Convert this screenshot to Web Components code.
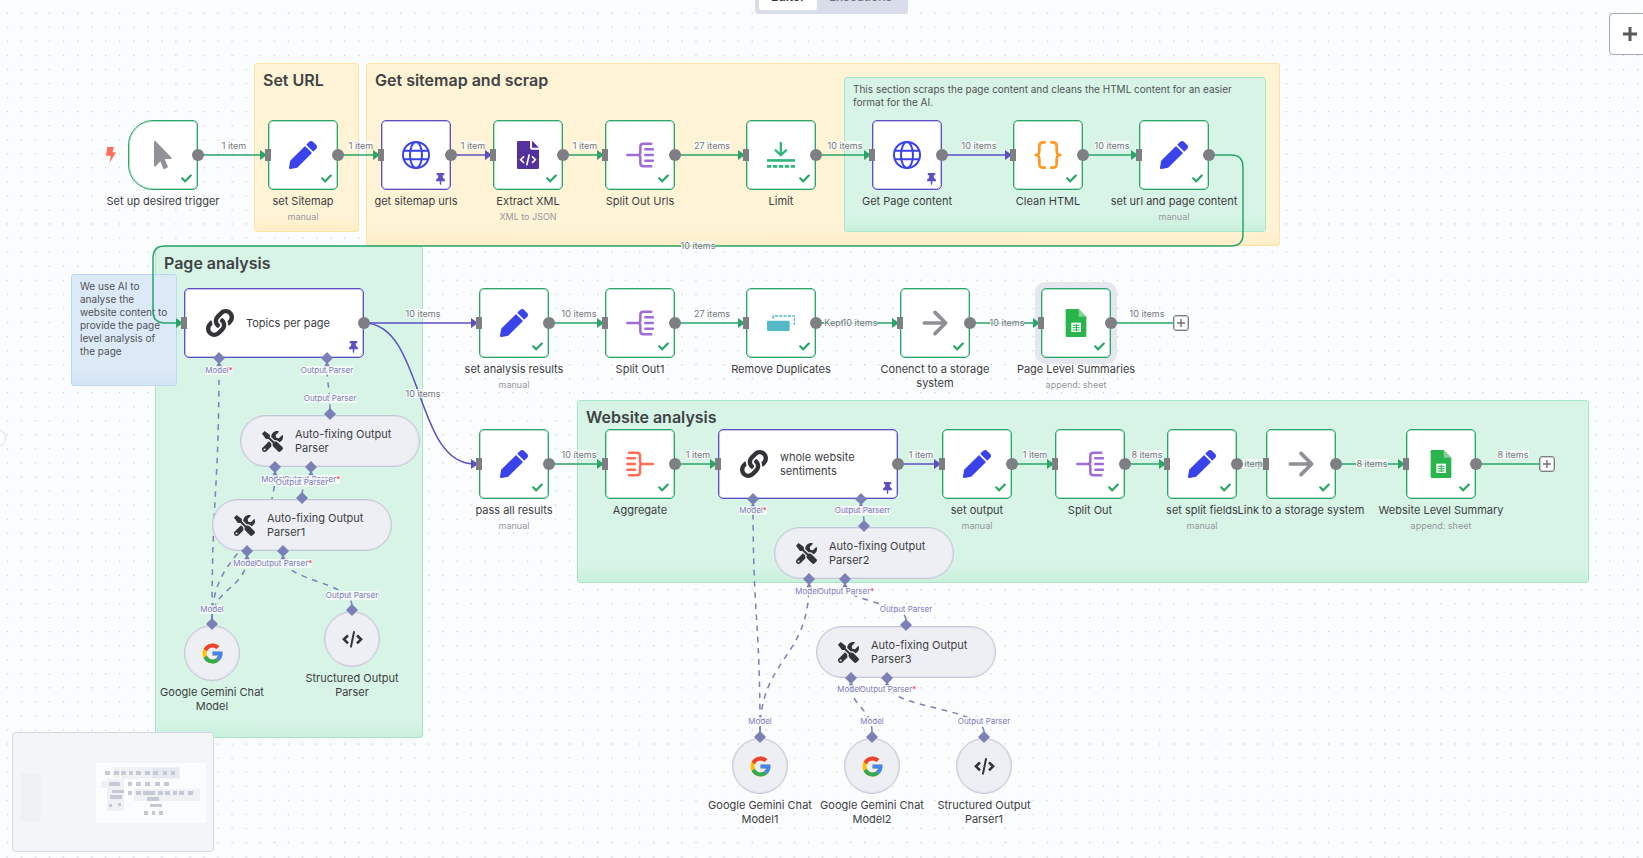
<!DOCTYPE html>
<html lang="en">
<head>
<meta charset="utf-8">
<title>Workflow editor</title>
<style>
html, body { margin: 0; height: 100%; }
body { font-family: Inter, "Liberation Sans", sans-serif; background: #fbfcfe; overflow: hidden; }
</style>
</head>
<body>
<flow-canvas>
  <sticky-note color="yellow" x="254" y="63" w="105" h="169"><h2>Set URL</h2></sticky-note>
  <sticky-note color="yellow" x="366" y="63" w="914" h="183"><h2>Get sitemap and scrap</h2></sticky-note>
  <sticky-note color="green" x="155" y="246" w="268" h="492"><h2>Page analysis</h2></sticky-note>
  <sticky-note color="green" x="577" y="400" w="1012" h="183"><h2>Website analysis</h2></sticky-note>
  <sticky-note color="green" x="844" y="77" w="422" h="155"><p>This section scraps the page content and cleans the HTML content for an easier format for the AI.</p></sticky-note>
  <sticky-note color="blue" x="71" y="274" w="106" h="112"><p>We use AI to analyse the website content to provide the page level analysis of the page</p></sticky-note>

  <flow-edges></flow-edges>

  <flow-label x="234" y="146">1 item</flow-label>
  <flow-label x="361" y="146">1 item</flow-label>
  <flow-label x="473" y="146">1 item</flow-label>
  <flow-label x="585" y="146">1 item</flow-label>
  <flow-label x="712" y="146">27 items</flow-label>
  <flow-label x="845" y="146">10 items</flow-label>
  <flow-label x="979" y="146">10 items</flow-label>
  <flow-label x="1112" y="146">10 items</flow-label>
  <flow-label x="698" y="246">10 items</flow-label>
  <flow-label x="423" y="314">10 items</flow-label>
  <flow-label x="423" y="394">10 items</flow-label>
  <flow-label x="579" y="314">10 items</flow-label>
  <flow-label x="712" y="314">27 items</flow-label>
  <flow-label x="834" y="323">Kept</flow-label>
  <flow-label x="860" y="323">10 items</flow-label>
  <flow-label x="1007" y="323">10 items</flow-label>
  <flow-label x="1147" y="314">10 items</flow-label>
  <flow-label x="579" y="455">10 items</flow-label>
  <flow-label x="698" y="455">1 item</flow-label>
  <flow-label x="921" y="455">1 item</flow-label>
  <flow-label x="1035" y="455">1 item</flow-label>
  <flow-label x="1147" y="455">8 items</flow-label>
  <flow-label x="1252" y="464">8 items</flow-label>
  <flow-label x="1372" y="464">8 items</flow-label>
  <flow-label x="1513" y="455">8 items</flow-label>

  <flow-node x="128" y="120" icon="pointer" trigger out>Set up desired trigger</flow-node>
  <flow-node x="268" y="120" icon="pencil" in out>set Sitemap<span slot="sub">manual</span></flow-node>
  <flow-node x="381" y="120" icon="globe" in out pinned>get sitemap urls</flow-node>
  <flow-node x="493" y="120" icon="xml" in out>Extract XML<span slot="sub">XML to JSON</span></flow-node>
  <flow-node x="605" y="120" icon="split" in out>Split Out Urls</flow-node>
  <flow-node x="746" y="120" icon="limit" in out>Limit</flow-node>
  <flow-node x="872" y="120" icon="globe" in out pinned>Get Page content</flow-node>
  <flow-node x="1013" y="120" icon="braces" in out>Clean HTML</flow-node>
  <flow-node x="1139" y="120" icon="pencil" in out>set url and page content<span slot="sub">manual</span></flow-node>

  <flow-node x="184" y="288" kind="wide" icon="link" in out pinned bottom="35 143">Topics per page</flow-node>
  <flow-node x="479" y="288" icon="pencil" in out>set analysis results<span slot="sub">manual</span></flow-node>
  <flow-node x="605" y="288" icon="split" in out>Split Out1</flow-node>
  <flow-node x="746" y="288" icon="dedupe" in out>Remove Duplicates</flow-node>
  <flow-node x="900" y="288" icon="arrow" in out>Conenct to a storage system</flow-node>
  <flow-node x="1041" y="288" icon="sheet" in out>Page Level Summaries<span slot="sub">append: sheet</span></flow-node>
  <add-step x="1173" y="315"></add-step>

  <flow-node x="479" y="429" icon="pencil" in out>pass all results<span slot="sub">manual</span></flow-node>
  <flow-node x="605" y="429" icon="merge" in out>Aggregate</flow-node>
  <flow-node x="718" y="429" kind="wide" icon="link" in out pinned bottom="35 143">whole website sentiments</flow-node>
  <flow-node x="942" y="429" icon="pencil" in out>set output<span slot="sub">manual</span></flow-node>
  <flow-node x="1055" y="429" icon="split" in out>Split Out</flow-node>
  <flow-node x="1167" y="429" icon="pencil" in out>set split fields<span slot="sub">manual</span></flow-node>
  <flow-node x="1266" y="429" icon="arrow" in out>Link to a storage system</flow-node>
  <flow-node x="1406" y="429" icon="sheet" in out>Website Level Summary<span slot="sub">append: sheet</span></flow-node>
  <add-step x="1539" y="456"></add-step>

  <flow-node x="240" y="415" kind="pill" icon="tools" top="90" bottom="35 71">Auto-fixing Output Parser</flow-node>
  <flow-node x="212" y="499" kind="pill" icon="tools" top="90" bottom="35 71">Auto-fixing Output Parser1</flow-node>
  <flow-node x="774" y="527" kind="pill" icon="tools" top="90" bottom="35 71">Auto-fixing Output Parser2</flow-node>
  <flow-node x="816" y="626" kind="pill" icon="tools" top="90" bottom="35 71">Auto-fixing Output Parser3</flow-node>

  <flow-node x="184" y="625" kind="round" icon="google" top="28">Google Gemini Chat Model</flow-node>
  <flow-node x="324" y="611" kind="round" icon="code" top="28">Structured Output Parser</flow-node>
  <flow-node x="732" y="738" kind="round" icon="google" top="28">Google Gemini Chat Model1</flow-node>
  <flow-node x="844" y="738" kind="round" icon="google" top="28">Google Gemini Chat Model2</flow-node>
  <flow-node x="956" y="738" kind="round" icon="code" top="28">Structured Output Parser1</flow-node>

  <flow-label port required x="219" y="371">Model</flow-label>
  <flow-label port x="327" y="371">Output Parser</flow-label>
  <flow-label port x="330" y="399">Output Parser</flow-label>
  <flow-label port required x="275" y="480">Model</flow-label>
  <flow-label port required x="312" y="480">Output Parser</flow-label>
  <flow-label port x="302" y="483">Output Parser</flow-label>
  <flow-label port required x="247" y="564">Model</flow-label>
  <flow-label port required x="284" y="564">Output Parser</flow-label>
  <flow-label port x="212" y="610">Model</flow-label>
  <flow-label port x="352" y="596">Output Parser</flow-label>
  <flow-label port required x="753" y="511">Model</flow-label>
  <flow-label port x="864" y="511">Output Parser</flow-label>
  <flow-label port x="861" y="511">Output Parser</flow-label>
  <flow-label port required x="809" y="592">Model</flow-label>
  <flow-label port required x="846" y="592">Output Parser</flow-label>
  <flow-label port x="906" y="610">Output Parser</flow-label>
  <flow-label port required x="851" y="690">Model</flow-label>
  <flow-label port required x="888" y="690">Output Parser</flow-label>
  <flow-label port x="760" y="722">Model</flow-label>
  <flow-label port x="872" y="722">Model</flow-label>
  <flow-label port x="984" y="722">Output Parser</flow-label>

  <view-tabs slot="chrome"></view-tabs>
  <add-node-button slot="chrome"></add-node-button>
  <panel-handle slot="chrome"></panel-handle>
  <mini-map slot="chrome"></mini-map>
</flow-canvas>

<script>
const GREEN = '#29a568', PURPLE = '#5b4fc2', PORT = '#7b80b6';

const splitPaths = `<path d="M500 314h22M528 314h3q8 0 8-8v-17q0-9 9-9h24M531 314q8 0 8 8v17q0 9 9 9h24M554 297h23M554 314h23M554 331h23"/>`;
const ICONS = {
  pointer: `<svg viewBox="0 0 320 512" fill="#909298"><path d="M302.189 329.126H196.105l55.831 135.993c3.889 9.428-.555 19.999-9.444 23.999l-49.165 21.427c-9.165 4-19.443-.571-23.332-9.714l-53.053-129.136-86.664 89.138C18.729 472.71 0 463.554 0 447.977V18.299C0 1.899 19.921-6.096 30.277 5.443l284.412 292.542c11.472 11.179 3.007 31.141-12.5 31.141z"/></svg>`,
  pencil: `<svg viewBox="0 0 512 512" fill="#3a42e9"><path d="M497.9 142.1l-46.1 46.1c-4.7 4.7-12.3 4.7-17 0l-111-111c-4.7-4.7-4.7-12.3 0-17l46.1-46.1c18.7-18.7 49.1-18.7 67.9 0l60.1 60.1c18.8 18.7 18.8 49.1 0 67.9zM284.2 99.8L21.6 362.4.4 483.9c-2.9 16.4 11.4 30.6 27.8 27.8l121.5-21.3 262.6-262.6c4.7-4.7 4.7-12.3 0-17l-111-111c-4.8-4.7-12.4-4.7-17.1 0z"/></svg>`,
  globe: `<svg viewBox="0 0 84 84" fill="none" stroke="#3a42e9" stroke-width="6"><circle cx="42" cy="42" r="39"/><ellipse cx="42" cy="42" rx="18" ry="39"/><path d="M6 29h72M6 55h72"/></svg>`,
  xml: `<svg viewBox="162 271 84 84"><path fill="#54319c" d="M177 270h33v21q0 6 6 6h21v53q0 6-6 6h-54q-6 0-6-6v-74q0-6 6-6z"/><path fill="#54319c" d="M216 270l21 21h-21z"/><path fill="none" stroke="#fff" stroke-width="5" d="M192 317l-10 10 10 10M216 317l10 10-10 10M208 311l-8 33"/></svg>`,
  split: `<svg viewBox="496 272 84 84" fill="none" stroke="#9f6bd9" stroke-width="7.500" stroke-linecap="round">${splitPaths}</svg>`,
  merge: `<svg viewBox="498 272 84 84" fill="none" stroke="#ff6d5a" stroke-width="7.500" stroke-linecap="round"><g transform="translate(1079 0) scale(-1 1)">${splitPaths}</g></svg>`,
  limit: `<svg viewBox="920 272 85 85" fill="none" stroke="#2fb67c" stroke-width="8"><path d="M962 278v36M946 300l16 15 16-15" stroke-linecap="round" stroke-width="7"/><path d="M920 331h85"/><path d="M920 349h85" stroke-dasharray="13 5"/></svg>`,
  braces: `<svg viewBox="611 271 84 84" fill="none" stroke="#ff9922" stroke-width="8" stroke-linecap="round" stroke-linejoin="round"><path d="M643 275h-4q-12 0-12 12v13q0 13-11 13 11 0 11 13v13q0 12 12 12h4M663 275h4q12 0 12 12v13q0 13 11 13-11 0-11 13v13q0 12-12 12h-4"/></svg>`,
  dedupe: `<svg viewBox="980 118 84 84"><rect x="980" y="153" width="68" height="31" rx="4" fill="#54b8c9"/><path d="M999 147v-8h64v24h-9" fill="none" stroke="#54b8c9" stroke-width="5" stroke-dasharray="9 4"/></svg>`,
  arrow: `<svg viewBox="365 118 84 84" fill="none" stroke="#8f9096" stroke-width="11" stroke-linecap="round" stroke-linejoin="round"><path d="M375 160h62M407 128l32 32-32 32"/></svg>`,
  sheet: `<svg viewBox="785 117 84 84"><path fill="#2ab44c" d="M800 117h35l23 23v57q0 4-4 4h-54q-4 0-4-4v-76q0-4 4-4z"/><path fill="#85d296" d="M835 117l23 23h-23z"/><path fill="#fff" d="M813 158h29v28h-29z"/><path stroke="#2ab44c" stroke-width="3" d="M817 166h21M817 173h21M817 180h21M828 162v21"/></svg>`,
  link: `<svg viewBox="0 0 512 512" fill="#333437"><path d="M326.612 185.391c59.747 59.809 58.927 155.698.36 214.59-.11.12-.24.25-.36.37l-67.2 67.2c-59.27 59.27-155.699 59.262-214.96 0-59.27-59.26-59.27-155.7 0-214.96l37.106-37.106c9.84-9.84 26.786-3.3 27.294 10.606.648 17.722 3.826 35.527 9.69 52.721 1.986 5.822.567 12.262-3.783 16.612l-13.087 13.087c-28.026 28.026-28.905 73.66-1.155 101.96 28.024 28.579 74.086 28.749 102.325.51l67.2-67.19c28.191-28.191 28.073-73.757 0-101.83-3.701-3.694-7.429-6.564-10.341-8.569a16.037 16.037 0 0 1-6.947-12.606c-.396-10.567 3.348-21.456 11.698-29.806l21.054-21.055c5.521-5.521 14.182-6.199 20.584-1.731a152.482 152.482 0 0 1 20.522 17.197zM467.547 44.449c-59.261-59.262-155.69-59.27-214.96 0l-67.2 67.2c-.12.12-.25.25-.36.37-58.566 58.892-59.387 154.781.36 214.59a152.454 152.454 0 0 0 20.521 17.196c6.402 4.468 15.064 3.789 20.584-1.731l21.054-21.055c8.35-8.35 12.094-19.239 11.698-29.806a16.037 16.037 0 0 0-6.947-12.606c-2.912-2.005-6.64-4.875-10.341-8.569-28.073-28.073-28.191-73.639 0-101.83l67.2-67.19c28.239-28.239 74.3-28.069 102.325.51 27.75 28.3 26.872 73.934-1.155 101.96l-13.087 13.087c-4.35 4.35-5.769 10.79-3.783 16.612 5.864 17.194 9.042 34.999 9.69 52.721.509 13.906 17.454 20.446 27.294 10.606l37.106-37.106c59.271-59.259 59.271-155.699.001-214.959z"/></svg>`,
  tools: `<svg viewBox="0 0 512 512" fill="#333437"><path d="M501.1 395.7L384 278.6c-23.1-23.1-57.6-27.6-85.4-13.9L192 158.1V96L64 0 0 64l96 128h62.1l106.6 106.6c-13.6 27.8-9.2 62.3 13.9 85.4l117.1 117.1c14.6 14.6 38.2 14.6 52.7 0l52.7-52.7c14.5-14.6 14.5-38.2 0-52.7zM331.7 225c28.3 0 54.9 11 74.9 31l19.4 19.4c15.8-6.9 30.8-16.5 43.8-29.5 37.1-37.1 49.7-89.3 37.9-136.7-2.2-9-13.5-12.1-20.1-5.5l-74.4 74.4-67.9-11.3L334 98.9l74.4-74.4c6.6-6.6 3.4-17.9-5.7-20.2-47.4-11.7-99.6.9-136.6 37.9-28.5 28.5-41.9 66.1-41.2 103.6l82.1 82.1c8.1-1.9 16.5-2.9 24.7-2.9zm-103.9 82l-56.7-56.7L18.7 402.8c-25 25-25 65.5 0 90.5s65.5 25 90.5 0l123.6-123.6c-7.6-19.9-9.9-41.6-5-62.7zM64 472c-13.2 0-24-10.8-24-24 0-13.3 10.7-24 24-24s24 10.7 24 24c0 13.2-10.7 24-24 24z"/></svg>`,
  code: `<svg viewBox="0 0 63 63" fill="none" stroke="#333437" stroke-width="8"><path d="M18 19L6 31l12 12M45 19l12 12-12 12"/><path d="M36 9l-9 44" stroke-linecap="round" stroke-width="6"/></svg>`,
  google: `<svg viewBox="3 3 42 42"><path fill="#ffc107" d="M43.611 20.083H42V20H24v8h11.303c-1.649 4.657-6.08 8-11.303 8-6.627 0-12-5.373-12-12s5.373-12 12-12c3.059 0 5.842 1.154 7.961 3.039l5.657-5.657C34.046 6.053 29.268 4 24 4 12.955 4 4 12.955 4 24s8.955 20 20 20 20-8.955 20-20c0-1.341-.138-2.65-.389-3.917z"/><path fill="#ea4335" d="M6.306 14.691l6.571 4.819C14.655 15.108 18.961 12 24 12c3.059 0 5.842 1.154 7.961 3.039l5.657-5.657C34.046 6.053 29.268 4 24 4 16.318 4 9.656 8.337 6.306 14.691z"/><path fill="#34a853" d="M24 44c5.166 0 9.860-1.977 13.409-5.192l-6.190-5.238C29.211 35.091 26.715 36 24 36c-5.202 0-9.619-3.317-11.283-7.946l-6.522 5.025C9.505 39.556 16.227 44 24 44z"/><path fill="#4285f4" d="M43.611 20.083H24v8h11.303c-.792 2.237-2.231 4.166-4.087 5.571l6.193 5.238C36.971 39.205 44 34 44 24c0-1.341-.138-2.65-.389-3.917z"/></svg>`,
  check: `<svg viewBox="0 60 512 392" fill="${GREEN}"><path d="M173.898 439.404l-166.4-166.4c-9.997-9.997-9.997-26.206 0-36.204l36.203-36.204c9.997-9.998 26.207-9.998 36.204 0L192 312.69 432.095 72.596c9.997-9.997 26.207-9.997 36.204 0l36.203 36.204c9.997 9.997 9.997 26.206 0 36.204l-294.4 294.401c-9.998 9.997-26.207 9.997-36.204-.001z"/></svg>`,
  pin: `<svg viewBox="0 0 384 512" fill="${PURPLE}"><path d="M298.028 214.267L285.793 96H328c13.255 0 24-10.745 24-24V24c0-13.255-10.745-24-24-24H56C42.745 0 32 10.745 32 24v48c0 13.255 10.745 24 24 24h42.207L85.972 214.267C37.465 236.82 0 277.261 0 328c0 13.255 10.745 24 24 24h136v104.007c0 1.242.289 2.467.845 3.578l24 48c2.941 5.882 11.364 5.893 14.311 0l24-48a8.008 8.008 0 0 0 .845-3.578V352h136c13.255 0 24-10.745 24-24-.001-51.183-37.983-91.42-85.973-113.733z"/></svg>`,
  bolt: `<svg viewBox="0 0 29 46" fill="#ff6d5a"><path d="M4 0h19l-4 15h10L10 46l4-21H0z"/></svg>`
};

class FlowElement extends HTMLElement {
  connectedCallback() {
    if (this.shadowRoot) return;
    for (const [attr, prop] of [['x', 'left'], ['y', 'top'], ['w', 'width'], ['h', 'height']])
      if (this.hasAttribute(attr)) this.style[prop] = this.getAttribute(attr) + 'px';
    this.attachShadow({ mode: 'open' }).innerHTML = this.render();
  }
}

customElements.define('flow-canvas', class extends FlowElement {
  render() {
    return `<style>
      :host { display: block; position: relative; height: 100vh; overflow: hidden; background: #fbfcfe; }
      .dots { position: absolute; inset: 0; width: 100%; height: 100%; }
    </style>
    <svg class="dots" aria-hidden="true">
      <pattern id="grid" width="20" height="20" patternUnits="userSpaceOnUse" patternTransform="translate(6.700 12.600) scale(.70275)"><rect width="1.700" height="1.700" fill="#c3c6cf"/></pattern>
      <rect width="100%" height="100%" fill="url(#grid)"/>
    </svg>
    <slot></slot>
    <slot name="chrome"></slot>`;
  }
});

customElements.define('sticky-note', class extends FlowElement {
  render() {
    return `<style>
      :host { display: block; position: absolute; box-sizing: border-box; padding: 5px 8px; border: 1px solid var(--line); border-radius: 3px;
        background: linear-gradient(transparent calc(100% - 16px), var(--shade)) var(--fill); }
      :host([color=yellow]) { --fill: #fff3d6; --line: #fce5a4; --shade: #ffeec8; }
      :host([color=green]) { --fill: #d7f4e6; --line: #a9e6c8; --shade: #c8f0dc; }
      :host([color=blue]) { --fill: #dce9f7; --line: #bdd7f1; --shade: #d5e5f6; }
      ::slotted(h2) { margin: 0; font-size: 16px; line-height: 22px; font-weight: 600; color: #404345; white-space: nowrap; }
      ::slotted(p) { margin: 0; font-size: 10px; line-height: 13px; color: #515356; }
    </style><slot></slot>`;
  }
});

customElements.define('flow-edges', class extends FlowElement {
  render() {
    const wire = (x1, x2, y, color) =>
      `<path d="M${x1} ${y}H${x2 - 5}" stroke="${color}"/><path d="M${x2 - 8} ${y - 5}l7 5-7 5z" fill="${color}"/>`;
    const r1 = 155, r2 = 323, r3 = 464;
    const wires = [
      [198, 268, r1, GREEN], [338, 381, r1, GREEN], [450, 493, r1, PURPLE], [563, 605, r1, GREEN], [675, 746, r1, GREEN],
      [816, 872, r1, GREEN], [942, 1013, r1, PURPLE], [1083, 1139, r1, GREEN],
      [364, 479, r2, PURPLE], [549, 605, r2, GREEN], [675, 746, r2, GREEN], [816, 900, r2, GREEN], [970, 1041, r2, GREEN],
      [549, 605, r3, GREEN], [675, 718, r3, GREEN], [898, 942, r3, PURPLE], [1012, 1055, r3, GREEN], [1125, 1167, r3, GREEN],
      [1237, 1266, r3, GREEN], [1336, 1406, r3, GREEN]
    ].map(w => wire(...w)).join('');
    const drop = (x1, y1, x2, y2) => {
      const m = (y1 + y2) / 2;
      return `<path d="M${x2} ${y2}C${x2} ${m} ${x1} ${m} ${x1} ${y1}"/>`;
    };
    const drops = [
      [219, 364, 212, 620], [327, 364, 330, 410], [275, 473, 212, 620], [311, 473, 302, 495], [247, 557, 212, 620], [283, 557, 352, 606],
      [753, 504, 760, 732], [861, 504, 864, 522], [809, 585, 760, 732], [845, 585, 906, 620], [851, 684, 872, 732], [887, 684, 984, 732]
    ].map(d => drop(...d)).join('');
    return `<style>
      :host { display: block; position: absolute; inset: 0; }
      svg { display: block; width: 100%; height: 100%; }
    </style>
    <svg fill="none" stroke-width="1.500" aria-hidden="true">
      <rect x="1035" y="282" width="82" height="82" rx="10" fill="#e5e7ef"/>
      ${wires}
      <path stroke="${GREEN}" d="M1209 155h22q12 0 12 12v67q0 12-12 12H165q-12 0-12 12v53q0 12 12 12h14"/>
      <path fill="${GREEN}" d="M176 318l7 5-7 5z"/>
      <path stroke="${PURPLE}" d="M364 323C424 323 414 464 474 464"/>
      <path fill="${PURPLE}" d="M471 459l7 5-7 5z"/>
      <path stroke="${GREEN}" d="M1111 323h63M1476 464h63"/>
      <g stroke="${PORT}" stroke-dasharray="5.600 5.600">${drops}</g>
    </svg>`;
  }
});

customElements.define('flow-label', class extends FlowElement {
  render() {
    return `<style>
      :host { display: flex; position: absolute; width: 0; height: 0; margin-top: -1px; align-items: center; justify-content: center;
        font-size: 9px; line-height: 9px; color: #76787d; white-space: nowrap; }
      :host([port]) { font-size: 8px; color: #7f7cb8; }
      span { flex: none; background: rgb(251 252 254 / .75); }
      b { font-weight: 400; color: #f0314a; }
    </style><span><slot></slot>${this.hasAttribute('required') ? '<b>*</b>' : ''}</span>`;
  }
});

customElements.define('flow-node', class extends FlowElement {
  render() {
    const has = n => this.hasAttribute(n);
    const list = n => (this.getAttribute(n) || '').split(' ').filter(Boolean);
    const kind = this.getAttribute('kind') || 'square';
    const inside = kind === 'wide' || kind === 'pill';
    const name = '<div class="name"><slot></slot></div>';
    return `<style>
      :host { display: block; position: absolute; width: 70px; font-size: 11px; line-height: 14px; color: #3d3e42; --line: ${GREEN}; --ring: #29a56859; }
      :host([pinned]) { --line: ${PURPLE}; --ring: #5b4fc259; }
      :host([kind=wide]), :host([kind=pill]) { width: 180px; }
      :host([kind=round]) { width: 56px; }
      .box { position: relative; display: flex; align-items: center; justify-content: center; box-sizing: border-box; height: 70px;
        background: #fff; border: 1px solid var(--line); border-radius: 5px; box-shadow: inset 0 0 0 1px var(--ring); }
      :host([trigger]) .box { border-radius: 25px 5px 5px 25px; }
      .wide, .pill { justify-content: flex-start; }
      .wide { padding-left: 21px; gap: 12px; }
      .pill, .round { background: #eeeff5; border-color: #c3c6d6; box-shadow: inset 0 0 0 1px #c3c6d64d; }
      .pill { height: 52px; border-radius: 26px; padding-left: 21px; gap: 12px; }
      .round { height: 56px; border-radius: 28px; }
      .icon { display: flex; justify-content: center; flex: none; width: 28px; height: 28px; }
      .pill .icon, .round .icon { width: 21px; height: 21px; }
      .icon svg { height: 100%; }
      .in { position: absolute; left: -4px; top: 28px; width: 6px; height: 12px; background: #7d7f83; }
      .out { position: absolute; right: -7px; top: 28px; width: 12px; height: 12px; border-radius: 6px; background: #7d7f83; }
      .status { position: absolute; right: 5px; bottom: 6px; width: 11px; height: 9px; display: flex; }
      .status.pin { width: 9px; height: 12px; bottom: 4px; }
      .status svg { width: 100%; height: 100%; }
      .bolt { position: absolute; left: -23px; top: 26px; width: 10px; height: 16px; }
      .port { position: absolute; width: 12px; height: 16px; margin-left: -7px; }
      .top { top: -8px; }
      .bottom { bottom: -11px; }
      .caption { display: flex; flex-direction: column; align-items: center; margin: 4px -36px 0; text-align: center; }
      :host([kind=round]) .caption { margin: 4px -28px 0; }
      .sub { margin-top: 3px; font-size: 9px; line-height: 12px; color: #96989e; }
      .pill .name, .wide .name { width: 104px; }
    </style>
    <div class="box ${kind}">
      <span class="icon">${ICONS[this.getAttribute('icon')]}</span>
      ${inside ? name : ''}
      ${has('trigger') ? ICONS.bolt.replace('<svg', '<svg class="bolt"') : ''}
      ${has('in') ? '<i class="in"></i>' : ''}${has('out') ? '<i class="out"></i>' : ''}
      ${has('pinned') ? `<span class="status pin">${ICONS.pin}</span>` : kind === 'square' ? `<span class="status">${ICONS.check}</span>` : ''}
      ${list('top').map(x => `<svg class="port top" style="left:${x}px" viewBox="0 0 12 16" fill="${PORT}"><path d="M6 0l6 6-6 6-6-6z"/></svg>`).join('')}
      ${list('bottom').map(x => `<svg class="port bottom" style="left:${x}px" viewBox="0 0 12 16" fill="${PORT}"><path d="M6 0l6 6-6 6-6-6zM6 9l3 6H3z"/></svg>`).join('')}
    </div>
    ${inside ? '' : `<div class="caption">${name}<div class="sub"><slot name="sub"></slot></div></div>`}`;
  }
});

customElements.define('add-step', class extends FlowElement {
  render() {
    return `<style>
      :host { display: block; position: absolute; width: 16px; height: 16px; }
      button { display: flex; align-items: center; justify-content: center; width: 16px; height: 16px; padding: 0; background: #fff; border: 1px solid #7d7f83; border-radius: 3px; box-shadow: inset 0 0 0 1px #7d7f8366; }
      svg { flex: none; width: 8px; height: 8px; }
    </style><button aria-label="Add step"><svg viewBox="0 0 8 8" stroke="#6d6f73" stroke-width="1.400"><path d="M4 0v8M0 4h8"/></svg></button>`;
  }
});

customElements.define('view-tabs', class extends FlowElement {
  render() {
    return `<style>
      :host { position: absolute; top: -20px; left: 0; right: 0; display: flex; justify-content: center; padding-left: 20px; }
      nav { display: flex; padding: 4px; border-radius: 4px; background: #d9dde9; }
      button { box-sizing: border-box; height: 26px; padding: 0 12px; border: 0; border-radius: 3px; background: none; font: 500 12px/26px Inter, "Liberation Sans", sans-serif; color: #6f717a; }
      button[aria-current] { background: #fff; color: #333437; font-weight: 600; }
    </style><nav><button aria-current="page">Editor</button><button>Executions</button></nav>`;
  }
});

customElements.define('add-node-button', class extends FlowElement {
  render() {
    return `<style>
      :host { position: absolute; top: 13px; right: -8px; display: block; }
      button { display: flex; align-items: center; justify-content: center; width: 42px; height: 42px; padding: 0; background: #fff; border: 1px solid #a3a7b8; border-radius: 4px; }
      svg { width: 14px; height: 14px; }
    </style><button aria-label="Add node"><svg viewBox="0 0 14 14" stroke="#57595c" stroke-width="3"><path d="M7 0v14M0 7h14"/></svg></button>`;
  }
});

customElements.define('panel-handle', class extends FlowElement {
  render() {
    return `<style>
      :host { position: absolute; left: -12px; top: 429px; display: block; }
      button { display: block; width: 18px; height: 18px; padding: 0; border: 1px solid #d9dce6; border-radius: 9px; background: #fff; }
    </style><button aria-label="Toggle panel"></button>`;
  }
});

customElements.define('mini-map', class extends FlowElement {
  render() {
    const box = (fill, list) => list.map(([x, y, w, h]) => `<rect x="${x}" y="${y}" width="${w}" height="${h}" fill="${fill}"/>`).join('');
    const cells = [];
    for (const x of [315, 342, 363, 387, 408, 435, 459, 489, 513]) cells.push([x, 213, x === 387 || x > 480 ? 12 : 15, 12]);
    for (const x of [384, 408, 435, 465, 492]) cells.push([x, 246, x === 384 ? 12 : 15, 12]);
    for (const x of [384, 408, 474, 495, 519, 537, 564]) cells.push([x, 273, x === 384 || x === 519 ? 12 : 15, 12]);
    cells.push([327, 246, 33, 12], [336, 270, 36, 9], [330, 285, 36, 12], [327, 312, 9, 9], [354, 309, 9, 9],
      [429, 273, 36, 12], [441, 291, 36, 12], [450, 312, 36, 9], [432, 333, 12, 12], [456, 333, 9, 12], [477, 333, 12, 12]);
    return `<style>
      :host { position: absolute; left: 12px; bottom: 6px; display: block; box-sizing: border-box; width: 202px; height: 120px;
        border: 1px solid #d5d8e4; border-radius: 4px; background: #f4f5f7; overflow: hidden; }
      svg { display: block; width: 100%; height: 100%; }
    </style>
    <svg viewBox="39 99 600 354" shape-rendering="crispEdges" aria-label="Minimap">
      ${box('#fbfcfe', [[289, 189, 328, 180]])}
      ${box('#f0f1f4', [[62, 219, 61, 144], [339, 201, 21, 33], [363, 201, 177, 36], [303, 243, 21, 21], [321, 237, 51, 96], [402, 267, 198, 36]])}
      ${box('#e6e9f0', [[456, 204, 81, 30]])}
      ${box('#c4c9d6', cells)}
    </svg>`;
  }
});
</script>
</body>
</html>
